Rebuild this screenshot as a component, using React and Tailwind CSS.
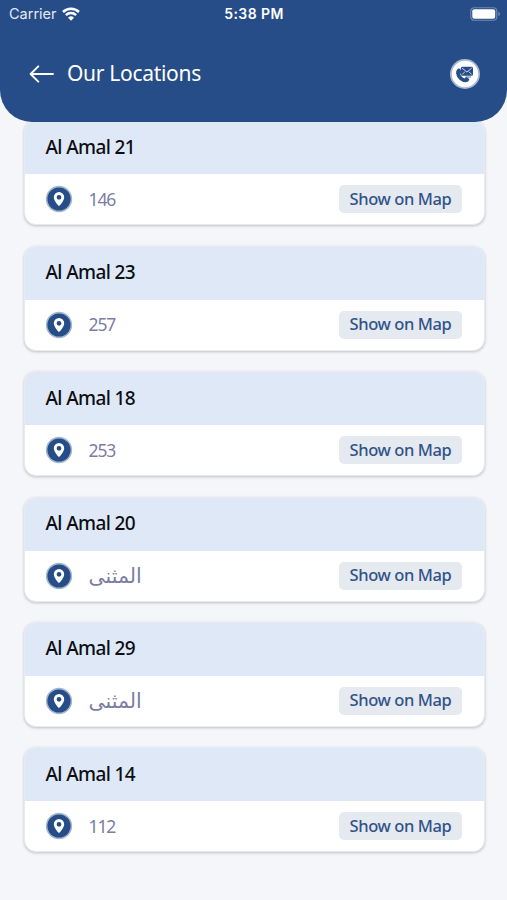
import React from "react";
import clsx from "clsx";

const LOCATIONS = [
  { name: "Al Amal 21", detail: "146" },
  { name: "Al Amal 23", detail: "257" },
  { name: "Al Amal 18", detail: "253" },
  { name: "Al Amal 20", detail: "المثنى", arabic: true },
  { name: "Al Amal 29", detail: "المثنى", arabic: true },
  { name: "Al Amal 14", detail: "112" },
];

const WifiIcon = () => (
  <svg width="18" height="14" viewBox="0 0 18 14" fill="none" stroke="white" strokeWidth="2.5">
    <path d="M1 5a11.4 11.4 0 0 1 16 0" />
    <path d="M3.9 8.2a7.3 7.3 0 0 1 10.2 0" />
    <path d="M9 13.8 6 10.8a4.3 4.3 0 0 1 6 0Z" fill="white" stroke="none" />
  </svg>
);

const BatteryIcon = () => (
  <svg width="31" height="14" viewBox="0 0 31 14">
    <rect x="0.75" y="0.75" width="26" height="12.5" rx="3.5" fill="none" stroke="#7089b3" strokeWidth="1.2" />
    <rect x="2.3" y="2.3" width="22.9" height="9.4" rx="2" fill="white" />
    <path d="M28.3 4.8c2.3.8 2.3 3.6 0 4.4Z" fill="#7089b3" />
  </svg>
);

const BackIcon = () => (
  <svg width="25" height="18" viewBox="0 0 25 18" fill="none" stroke="white" strokeWidth="1.9" strokeLinecap="round" strokeLinejoin="round">
    <path d="M9.3 1.3 1.6 9l7.7 7.7M1.9 9H24" />
  </svg>
);

const ContactIcon = () => (
  <svg width="32" height="32" viewBox="0 0 32 32">
    <circle cx="16" cy="16" r="15" fill="#a9b9d2" />
    <circle cx="16" cy="16" r="13.2" fill="white" />
    <path d="M9 10.8c-1.9 1.5-2.5 3.7-1.3 6.6 1.6 3.9 5 6.5 8.8 6.8 1.9.1 3.2-.8 3.7-2.4.2-.6 0-1.1-.5-1.4l-2-1.1c-.5-.3-1-.2-1.3.2l-.8.9c-2-.6-3.8-2.4-4.5-4.3l1-1c.4-.4.5-.8.3-1.3l-1-2.4c-.5-.9-1.6-1.2-2.4-.6Z" fill="#264d87" />
    <rect x="11.8" y="8.8" width="12.2" height="9" rx="1.5" fill="#264d87" />
    <path d="m13 10 4.9 4 4.9-4M13 16.6l3-3M22.8 16.6l-3-3" fill="none" stroke="#d7deeb" strokeWidth="0.9" />
    <path d="M16.5 19h5.6" stroke="#264d87" strokeWidth="0.8" />
  </svg>
);

const PinIcon = () => (
  <svg width="28" height="28" viewBox="0 0 28 28">
    <circle cx="14" cy="14" r="13.2" fill="#a3b6d0" />
    <circle cx="14" cy="14" r="11.6" fill="#264d87" />
    <path fillRule="evenodd" d="M14 7.1A5.2 5.2 0 0 0 8.8 12.3c0 3.7 5.2 9 5.2 9s5.2-5.3 5.2-9A5.2 5.2 0 0 0 14 7.1Zm0 2.8a2.4 2.4 0 1 1 0 4.8 2.4 2.4 0 0 1 0-4.8Z" fill="white" />
  </svg>
);

const LocationCard = ({ name, detail, arabic }) => (
  <div className="h-[105px] shrink-0 overflow-hidden rounded-xl border border-[#e7eaf0] bg-white shadow-[0_1px_3px_rgba(0,0,0,0.22)]">
    <div className="flex h-[53px] items-center bg-[#dfe8f6] pb-[2px] pl-[21px]">
      <h2 className="text-[19px] leading-6 font-medium tracking-[-0.6px] text-[#0c0e14]">{name}</h2>
    </div>
    <div className="flex h-[50px] items-center pr-[22px] pl-5">
      <PinIcon />
      <span
        className={clsx(
          "ml-4 leading-6 text-[#7b7da3]",
          arabic ? "pb-[2px] text-[20.5px]" : "pb-px text-[17.5px] tracking-[-1.1px]"
        )}
      >
        {detail}
      </span>
      <button className="ml-auto h-7 w-[123px] rounded-[5px] bg-[#e5e9f0] pb-px text-[16.5px] leading-6 font-medium tracking-[-0.4px] whitespace-nowrap text-[#315389]">
        Show on Map
      </button>
    </div>
  </div>
);

const App = () => {
  return (
    <div className="flex h-[900px] w-[507px] flex-col overflow-hidden bg-[#f4f6f9] font-['Noto_Sans','DejaVu_Sans',sans-serif]">
      <header className="z-10 h-[122px] shrink-0 rounded-b-[32px] bg-[#264d87] text-white">
        <div className="grid h-[27px] grid-cols-3 items-center pr-[6px] pl-[9px] font-['Inter',sans-serif]">
          <div className="flex items-center gap-[5px]">
            <span className="text-[14.5px] text-[#e4eaf4]">Carrier</span>
            <WifiIcon />
          </div>
          <span className="pr-[2px] text-center text-[14px] font-semibold tracking-[0.4px]">5:38 PM</span>
          <div className="flex justify-end">
            <BatteryIcon />
          </div>
        </div>
        <div className="flex h-[93px] items-center pr-[26px] pl-[29px]">
          <BackIcon />
          <h1 className="ml-[13px] text-[21px] tracking-[-0.3px]">Our Locations</h1>
          <div className="ml-auto">
            <ContactIcon />
          </div>
        </div>
      </header>
      <main className="-mt-[1.6px] flex flex-col gap-[20.4px] pr-[22px] pl-[23.5px]">
        {LOCATIONS.map((loc) => (
          <LocationCard key={loc.name} {...loc} />
        ))}
      </main>
    </div>
  );
};

export default App;
